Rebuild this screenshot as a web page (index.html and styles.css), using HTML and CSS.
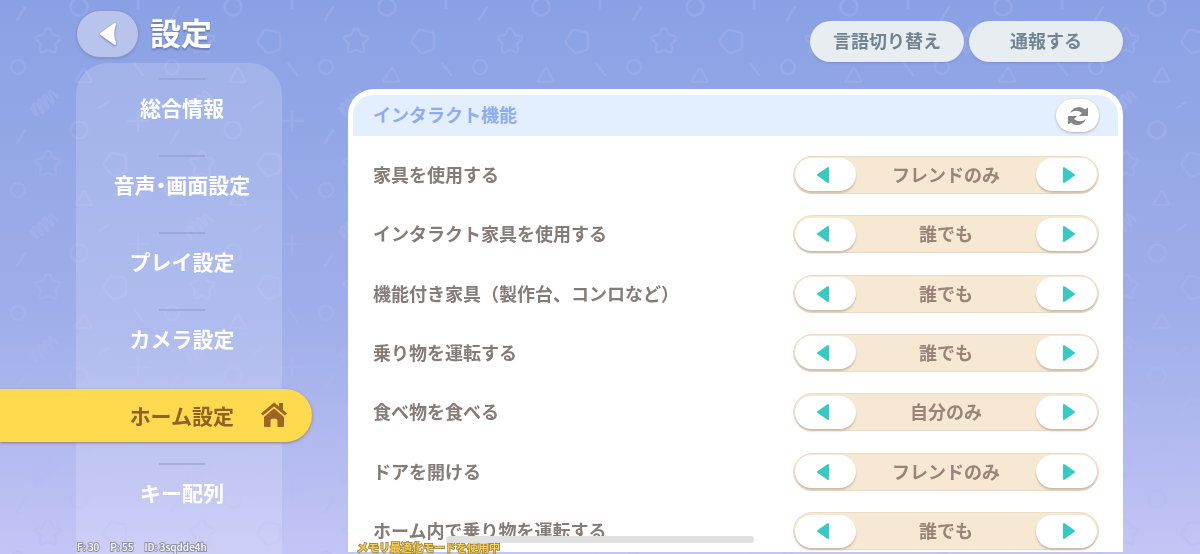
FILE: index.html
```html
<!DOCTYPE html>
<html lang="ja">
<head>
<meta charset="utf-8">
<meta name="viewport" content="width=device-width, initial-scale=1">
<title>設定</title>
<link rel="stylesheet" href="styles.css">
</head>
<body>
<svg class="backdrop" aria-hidden="true">
  <defs>
    <pattern id="shapes" width="154" height="123" patternUnits="userSpaceOnUse">
      <g fill="none" stroke="#b4bcf2" stroke-opacity=".3" stroke-width="2.6" stroke-linecap="round" stroke-linejoin="round">
        <path d="M48 28q2 0 3 3l2 4 5 1q4 1 1 4l-4 4 1 5q0 4-3 3l-5-2-5 2q-3 1-3-3l1-5-4-4q-3-3 1-4l5-1 2-4q1-3 3-3z"/>
        <path d="M112 30l12 2q2 1 2 3v12q0 2-2 3l-9 3q-2 0-3-1l-8-9q-1-2 0-3l6-9q1-1 2-1z"/>
        <circle cx="79" cy="7" r="8.500"/>
        <circle cx="79" cy="130" r="8.500"/>
        <circle cx="18" cy="67" r="7"/>
        <path d="M83 69q1-1 2 0l6 11q1 2-1 2H77q-2 0-1-2z"/>
        <path d="M25 7l-8 13M134 63l9 12M99 108l9-6"/>
        <path d="M138 0v8M138 111v12M128 121h21"/>
        <path d="M31 108l5 7q2 1 1-2l-4-8q0-3 3-1l6 8q2 1 1-2l-5-9q0-3 3-1l6 8q2 1 1-2l-5-9q0-3 3-1l6 7q2 1 1-2l-4-8q0-3 3-1l6 6"/>
      </g>
    </pattern>
  </defs>
  <rect width="100%" height="100%" fill="url(#shapes)"/>
</svg>

<div class="screen">
  <aside class="side">
    <header class="title-bar">
      <button class="back" type="button" aria-label="戻る">
        <svg viewBox="0 0 20 26" width="20" height="26"><path d="M16.500 2Q18.500 1.500 18 4Q14.500 13 18 22Q18.500 24.500 16.500 24L2.500 14Q1 13 2.500 12Z" fill="#fff"/></svg>
      </button>
      <h1>設定</h1>
    </header>
    <nav class="menu" aria-label="設定">
      <a class="item" href="#general"><span>総合情報</span></a>
      <a class="item" href="#av"><span>音声・画面設定</span></a>
      <a class="item" href="#play"><span>プレイ設定</span></a>
      <a class="item" href="#camera"><span>カメラ設定</span></a>
      <a class="item active" href="#home" aria-current="page"><span>ホーム設定</span>
        <svg viewBox="0 0 28 26" width="28" height="26" fill="#9c6426"><path d="M14 0.500L19 4.500V1.500Q19 1 19.500 1H22.500Q23 1 23 1.500V8L27 11.500L25 13.500L14 4.500L3 13.500L1 11.500Z"/><path d="M14 6.500L24 15V24Q24 25 23 25H17.500V18.500Q17.500 16.500 14 16.500T10.500 18.500V25H5Q4 25 4 24V15Z"/></svg>
      </a>
      <a class="item" href="#keys"><span>キー配列</span></a>
    </nav>
  </aside>

  <main class="main">
    <div class="toolbar">
      <button type="button">言語切り替え</button>
      <button type="button">通報する</button>
    </div>
    <section class="panel">
      <header class="panel-head">
        <h2>インタラクト機能</h2>
        <button class="refresh" type="button" aria-label="更新">
          <svg viewBox="0 0 20 18" width="20" height="18" fill="#858585"><path d="M2 6Q5 0 11 0Q14.500 0 17 2.500L20 0.500V9H11L14 6Q8 1.500 2 6Z"/><path d="M18 12Q15 18 9 18Q5.500 18 3 15.500L0 17.500V9H9L6 12Q12 16.500 18 12Z"/></svg>
        </button>
      </header>
      <ul class="options">
        <li><span id="o1">家具を使用する</span>
          <div class="picker" role="group" aria-labelledby="o1"><button type="button" aria-label="前へ"><svg viewBox="0 0 14 18" width="14" height="18"><path d="M12 2V16L2 9Z"/></svg></button><output>フレンドのみ</output><button type="button" aria-label="次へ"><svg viewBox="0 0 14 18" width="14" height="18"><path d="M2 2V16L12 9Z"/></svg></button></div></li>
        <li><span id="o2">インタラクト家具を使用する</span>
          <div class="picker" role="group" aria-labelledby="o2"><button type="button" aria-label="前へ"><svg viewBox="0 0 14 18" width="14" height="18"><path d="M12 2V16L2 9Z"/></svg></button><output>誰でも</output><button type="button" aria-label="次へ"><svg viewBox="0 0 14 18" width="14" height="18"><path d="M2 2V16L12 9Z"/></svg></button></div></li>
        <li><span id="o3">機能付き家具（製作台、コンロなど）</span>
          <div class="picker" role="group" aria-labelledby="o3"><button type="button" aria-label="前へ"><svg viewBox="0 0 14 18" width="14" height="18"><path d="M12 2V16L2 9Z"/></svg></button><output>誰でも</output><button type="button" aria-label="次へ"><svg viewBox="0 0 14 18" width="14" height="18"><path d="M2 2V16L12 9Z"/></svg></button></div></li>
        <li><span id="o4">乗り物を運転する</span>
          <div class="picker" role="group" aria-labelledby="o4"><button type="button" aria-label="前へ"><svg viewBox="0 0 14 18" width="14" height="18"><path d="M12 2V16L2 9Z"/></svg></button><output>誰でも</output><button type="button" aria-label="次へ"><svg viewBox="0 0 14 18" width="14" height="18"><path d="M2 2V16L12 9Z"/></svg></button></div></li>
        <li><span id="o5">食べ物を食べる</span>
          <div class="picker" role="group" aria-labelledby="o5"><button type="button" aria-label="前へ"><svg viewBox="0 0 14 18" width="14" height="18"><path d="M12 2V16L2 9Z"/></svg></button><output>自分のみ</output><button type="button" aria-label="次へ"><svg viewBox="0 0 14 18" width="14" height="18"><path d="M2 2V16L12 9Z"/></svg></button></div></li>
        <li><span id="o6">ドアを開ける</span>
          <div class="picker" role="group" aria-labelledby="o6"><button type="button" aria-label="前へ"><svg viewBox="0 0 14 18" width="14" height="18"><path d="M12 2V16L2 9Z"/></svg></button><output>フレンドのみ</output><button type="button" aria-label="次へ"><svg viewBox="0 0 14 18" width="14" height="18"><path d="M2 2V16L12 9Z"/></svg></button></div></li>
        <li><span id="o7">ホーム内で乗り物を運転する</span>
          <div class="picker" role="group" aria-labelledby="o7"><button type="button" aria-label="前へ"><svg viewBox="0 0 14 18" width="14" height="18"><path d="M12 2V16L2 9Z"/></svg></button><output>誰でも</output><button type="button" aria-label="次へ"><svg viewBox="0 0 14 18" width="14" height="18"><path d="M2 2V16L12 9Z"/></svg></button></div></li>
      </ul>
    </section>
  </main>
</div>

<div class="stats"><span>F: 30</span><span>P: 55</span><span>ID: 3sqdde4h</span></div>
<div class="notice">メモリ最適化モードを使用中</div>
<div class="home-bar"></div>
</body>
</html>
```

FILE: styles.css
```css
* {
  box-sizing: border-box;
}

body {
  margin: 0;
  height: 100vh;
  overflow: hidden;
  font-family: "Noto Sans CJK JP", sans-serif;
  font-size: 18px;
  line-height: 24px;
  font-weight: 700;
  color: #857b77;
  background: linear-gradient(#89a1e4, #a1afea 60%, #c3c5f5);
}

h1,
h2,
ul {
  margin: 0;
  padding: 0;
}

button {
  padding: 0;
  border: 0;
  font: inherit;
  color: inherit;
  display: flex;
  align-items: center;
  justify-content: center;
}

.backdrop {
  position: fixed;
  inset: 0;
  width: 100%;
  height: 100%;
}

.screen {
  position: relative;
  display: flex;
  height: 100vh;
}

.side {
  flex: none;
  width: 282px;
  padding-left: 76px;
  display: flex;
  flex-direction: column;
}

.title-bar {
  display: flex;
  align-items: center;
  gap: 11px;
  height: 63px;
  padding-top: 4px;
}

.back {
  width: 63px;
  height: 48px;
  border-radius: 24px;
  border: 1px solid #8795cb;
  background: #b9c4ec;
  box-shadow: 0 1px 2px #6f7fc080;
}

.back svg {
  filter: drop-shadow(0 1px 1px #6876a8);
}

h1 {
  padding-bottom: 4px;
  font-size: 31px;
  line-height: 40px;
  color: #fff;
  text-shadow: 0 2px 2px #6c7cb4;
}

.menu {
  flex: 1;
  padding-top: 6px;
  border-radius: 32px 32px 0 0;
  background: #ffffff2b;
  font-size: 21px;
  font-feature-settings: "halt";
}

.item {
  display: flex;
  flex-direction: column;
  align-items: center;
  gap: 2px;
  height: 77px;
  padding-top: 9px;
  padding-left: 6px;
  color: #fff;
  text-decoration: none;
}

.item::before {
  content: "";
  width: 46px;
  height: 2px;
  background: #8f9cd4;
  opacity: .6;
}

.item span {
  line-height: 50px;
}

.item.active {
  position: relative;
  flex-direction: row;
  justify-content: flex-end;
  gap: 26px;
  height: 53px;
  margin: 12px -30px 12px -76px;
  padding: 0 24px 2px 0;
  border-radius: 0 27px 27px 0;
  background: #ffda4e;
  color: #8f6127;
  box-shadow: 0 1px 3px #8a7f7a;
}

.item.active::before {
  content: none;
}

.main {
  flex: 1;
  min-width: 0;
  margin: 0 77px 2px 66px;
  display: flex;
  flex-direction: column;
}

.toolbar {
  display: flex;
  justify-content: flex-end;
  gap: 5px;
  padding: 21px 0 27px;
}

.toolbar button {
  width: 154px;
  height: 41px;
  padding-bottom: 3px;
  border-radius: 21px;
  background: #e8edf2;
  color: #708593;
  box-shadow: 0 1px 2px #7080b880;
}

.panel {
  flex: 1;
  min-height: 0;
  display: flex;
  flex-direction: column;
  overflow: hidden;
  padding: 6px 5px 0;
  border-radius: 26px 26px 0 0;
  background: #fff;
}

.panel-head {
  flex: none;
  display: flex;
  align-items: center;
  justify-content: space-between;
  height: 41px;
  padding: 0 19px 0 20px;
  border-radius: 20px 20px 0 0;
  background: #e3effe;
}

h2 {
  padding-bottom: 3px;
  font-size: 18px;
  color: #8fabf1;
}

.refresh {
  width: 43px;
  height: 33px;
  border-radius: 17px;
  background: #fff;
  box-shadow: 0 1px 3px #a9b2bd;
}

.options {
  flex: 1;
  margin-bottom: -9px;
  padding: 9px 19px 0 20px;
  list-style: none;
  display: grid;
  grid-auto-rows: minmax(56px, 1fr);
}

.options li {
  display: flex;
  align-items: center;
  justify-content: space-between;
}

.options span,
.options output {
  padding-bottom: 2px;
}

.picker {
  display: flex;
  align-items: center;
  justify-content: space-between;
  width: 306px;
  height: 38px;
  padding: 0 1px;
  border: 1px solid #ecdcc6;
  border-radius: 19px;
  background: #f6e8d2;
  color: #9a8379;
}

.picker button {
  width: 61px;
  height: 33px;
  border-radius: 17px;
  background: #fff;
  box-shadow: 0 2px 2px #cbbba8;
}

.picker button:first-child {
  padding-right: 5px;
}

.picker button:last-child {
  padding-left: 5px;
}

.picker path {
  fill: #35cbc4;
  stroke: #35cbc4;
  stroke-width: 2;
  stroke-linejoin: round;
}

.stats,
.notice {
  position: fixed;
  bottom: 0;
  line-height: 14px;
  paint-order: stroke fill;
}

.stats {
  left: 77px;
  display: flex;
  gap: 11px;
  font-size: 10px;
  font-weight: 500;
  color: #fff;
  -webkit-text-stroke: 2px #8f91ab;
}

.notice {
  left: 357px;
  font-size: 11px;
  font-weight: 500;
  color: #ffd34f;
  -webkit-text-stroke: 2px #a58c4c;
}

.home-bar {
  position: fixed;
  left: 50%;
  bottom: 11px;
  width: 308px;
  height: 7px;
  margin-left: -154px;
  border-radius: 4px;
  background: #e2e1e1;
}
```
